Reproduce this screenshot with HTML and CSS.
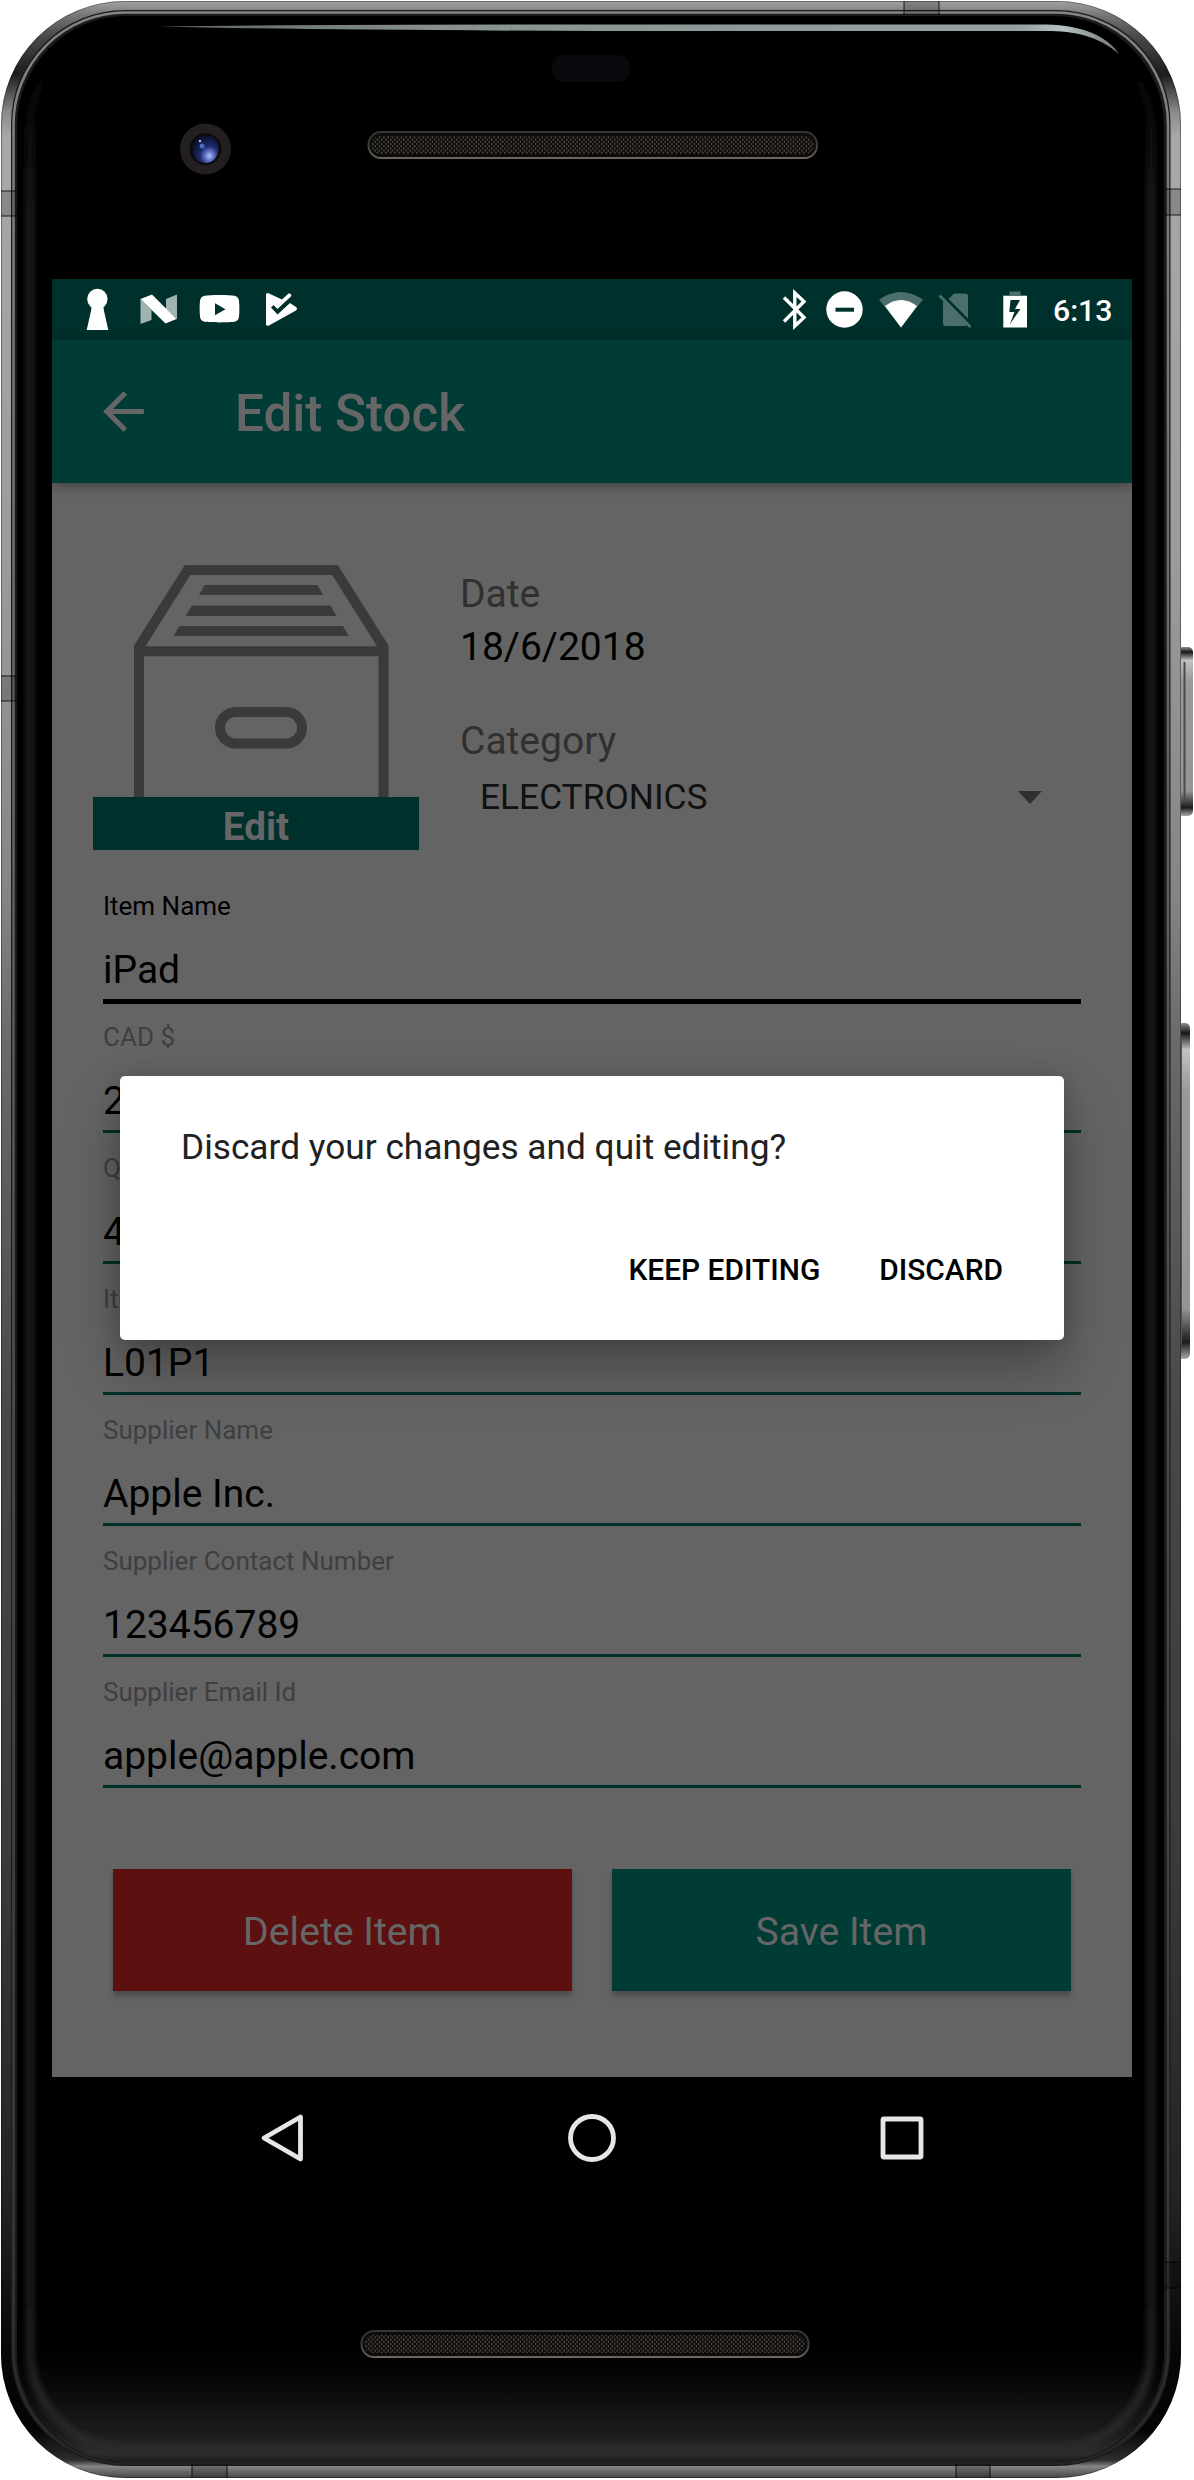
FILE: index.html
```html
<!DOCTYPE html>
<html lang="en">
<head>
<meta charset="utf-8">
<title>Edit Stock</title>
<link rel="stylesheet" href="styles.css">
</head>
<body>
<div class="device">
  <svg class="device-art" viewBox="0 0 1194 2480" aria-hidden="true">
    <defs>
      <linearGradient id="rim" gradientUnits="userSpaceOnUse" x1="0" y1="0" x2="0" y2="2480">
        <stop offset="0" stop-color="#a4a6a5"/><stop offset=".006" stop-color="#777"/>
        <stop offset=".014" stop-color="#4c4c4c"/><stop offset=".03" stop-color="#1c1c1c"/>
        <stop offset=".045" stop-color="#8a8a8a"/><stop offset=".055" stop-color="#a8a8a8"/>
        <stop offset=".22" stop-color="#9c9c9c"/><stop offset=".36" stop-color="#858585"/>
        <stop offset=".42" stop-color="#6a6a6a"/><stop offset=".57" stop-color="#484848"/>
        <stop offset=".75" stop-color="#3a3a3a"/><stop offset=".89" stop-color="#222"/>
        <stop offset=".95" stop-color="#060606"/><stop offset=".98" stop-color="#050505"/>
        <stop offset=".992" stop-color="#2e2e2e"/><stop offset=".9945" stop-color="#858585"/>
        <stop offset="1" stop-color="#3c3c3c"/>
      </linearGradient>
      <linearGradient id="bezel" gradientUnits="userSpaceOnUse" x1="0" y1="0" x2="0" y2="2480">
        <stop offset="0" stop-color="#858585"/><stop offset=".5" stop-color="#505050"/>
        <stop offset=".9" stop-color="#383838"/><stop offset="1" stop-color="#242424"/>
      </linearGradient>
      <linearGradient id="chin" x1="0" y1="0" x2="0" y2="1">
        <stop offset="0" stop-color="#000"/><stop offset=".3" stop-color="#080808"/>
        <stop offset=".75" stop-color="#1c1c1c"/><stop offset=".92" stop-color="#2d2d2d"/>
        <stop offset="1" stop-color="#1e1e1e"/>
      </linearGradient>
      <linearGradient id="sheen" gradientUnits="userSpaceOnUse" x1="0" y1="60" x2="0" y2="2462">
        <stop offset="0" stop-color="#1e1e1e" stop-opacity="0"/><stop offset=".06" stop-color="#1e1e1e"/>
        <stop offset=".93" stop-color="#1e1e1e"/><stop offset="1" stop-color="#2c2c2c"/>
      </linearGradient>
      <filter id="soft" x="-5%" y="-5%" width="110%" height="110%"><feGaussianBlur stdDeviation="3"/></filter>
      <linearGradient id="glare" gradientUnits="userSpaceOnUse" x1="159" y1="0" x2="1120" y2="0">
        <stop offset="0" stop-color="#5c6666"/><stop offset=".3" stop-color="#879190"/>
        <stop offset=".9" stop-color="#98a2a2"/><stop offset=".94" stop-color="#b9c3c3"/><stop offset="1" stop-color="#6c7474"/>
      </linearGradient>
      <linearGradient id="key" x1="0" y1="0" x2="0" y2="1">
        <stop offset="0" stop-color="#8c8c8c"/><stop offset=".03" stop-color="#161616"/>
        <stop offset=".08" stop-color="#c2c2c2"/><stop offset=".2" stop-color="#999"/>
        <stop offset=".85" stop-color="#959595"/><stop offset=".95" stop-color="#1c1c1c"/>
        <stop offset="1" stop-color="#aaa"/>
      </linearGradient>
      <linearGradient id="slot" x1="0" y1="0" x2="0" y2="1">
        <stop offset="0" stop-color="#343434"/><stop offset=".5" stop-color="#3c3c3c"/><stop offset="1" stop-color="#6b6660"/>
      </linearGradient>
      <radialGradient id="lens" cx=".65" cy=".75" r=".8">
        <stop offset="0" stop-color="#b4c4ff"/><stop offset=".2" stop-color="#6476c8"/>
        <stop offset=".45" stop-color="#1c2a6c"/><stop offset="1" stop-color="#080b1c"/>
      </radialGradient>
      <pattern id="mesh" width="4.4" height="4.4" patternUnits="userSpaceOnUse">
        <rect width="4.4" height="4.4" fill="#0b0a08"/>
        <ellipse cx="1.1" cy="1.1" rx=".8" ry="1" fill="#5d574c"/>
        <ellipse cx="3.3" cy="3.3" rx=".8" ry="1" fill="#5d574c"/>
      </pattern>
      <clipPath id="glass"><rect x="17" y="16" width="1147" height="2446" rx="110"/></clipPath>
    </defs>
    <rect x="1178" y="647" width="15" height="169" rx="5" fill="url(#key)"/>
    <path d="M1184.500 662v140" stroke="#4a4a4a" stroke-width="2"/>
    <rect x="1178" y="1023" width="12" height="336" rx="5" fill="url(#key)"/>
    <path d="M1181.500 1040v305" stroke="#555" stroke-width="1"/>
    <rect x="1" y="1" width="1180" height="2477" rx="124" fill="url(#rim)"/>
    <rect x="1.500" y="1.500" width="1179" height="2476" rx="123" fill="none" stroke="#000" stroke-opacity=".35"/>
    <rect x="11" y="10" width="1159.500" height="2456" rx="114" fill="#1b1b1b"/>
    <rect x="13.500" y="12.500" width="1154.500" height="2451" rx="112" fill="none" stroke="url(#bezel)" stroke-width="2.500"/>
    <g fill="#000" fill-opacity=".18">
      <path d="M1 191h16v25H1zM1 676h16v25H1zM1165 189h16v26h-16zM1165 2262h16v26h-16zM904 1h35v14h-35zM192 2463h35v15h-35zM956 2463h34v15h-34z"/>
      <path d="M1 191h16M1 216h16M1 676h16M1 701h16M1165 189h16M1165 215h16M1165 2262h16M1165 2288h16M904 1v14M939 1v14M192 2463v15M227 2463v15M956 2463v15M990 2463v15" stroke="#000" stroke-opacity=".55" stroke-width="1.500"/>
    </g>
    <rect x="17" y="16" width="1147" height="2446" rx="110" fill="#000"/>
    <g clip-path="url(#glass)">
      <rect x="17" y="2350" width="1147" height="112" fill="url(#chin)"/>
      <rect x="30" y="29" width="1121" height="2421" rx="100" fill="none" stroke="url(#sheen)" stroke-width="8" filter="url(#soft)"/>
    </g>
    <path d="M159 26.500 Q300 24.500 600 24.500H1046C1083 25 1108 37 1119 54C1098 36 1075 31 1046 31H600Q300 30 159 26.500Z" fill="url(#glare)"/>
    <rect x="552" y="55" width="78" height="27" rx="12" fill="#08090d"/>
    <circle cx="205.500" cy="149" r="25.500" fill="#231f20"/>
    <circle cx="205.500" cy="149" r="16" fill="#0b0a0c"/>
    <ellipse cx="205.500" cy="149" rx="13" ry="14" fill="url(#lens)"/>
    <circle cx="202" cy="146" r="2.500" fill="#4a69c8"/><circle cx="200" cy="141" r="1.300" fill="#a9b7e6"/>
    <g stroke="url(#slot)" stroke-width="2">
      <rect x="368.500" y="132" width="448.500" height="26" rx="12.500" fill="#0d0c0b"/>
      <rect x="361.500" y="2331" width="447" height="26" rx="12.500" fill="#0d0c0b"/>
    </g>
    <rect x="371" y="136" width="443" height="18" rx="9" fill="url(#mesh)"/>
    <rect x="364" y="2335" width="441" height="18" rx="9" fill="url(#mesh)"/>
  </svg>

  <div class="screen">
    <div class="status-bar">
      <svg class="status-left" width="240" height="61" viewBox="80 279 240 61" fill="#fff">
        <circle cx="97.400" cy="299" r="10.200"/><path d="M92 304h11l1 7 4.300 19H86.700l4.300-19z"/>
        <path fill="#a0b3b0" d="M140.500 299l11 11v10l-11 4zM166 299l11-4.500v25L166 309z"/>
        <path d="M140.500 299l11.500-4.500 24.500 24.500-11 4.500z"/>
        <path fill-rule="evenodd" d="M219.500 295c7 0 12 .2 15 .8 3 .7 4 2.200 4.500 5 .5 5 .5 11 0 16-.5 3-1.500 4.300-4.500 5-5 .8-25 .8-30 0-3-.7-4-2-4.500-5-.5-5-.5-11 0-16 .5-2.800 1.500-4.300 4.500-5 3-.6 8-.8 15-.8zM215 303.300v12l10.500-6z"/>
        <path d="M266 295c0-1.600 1.500-2.400 3-1.600l13 6 6-5.500c1.500-1 3.500 0 3.400 2L277.500 309l-4-4-2.500 2.500 6.500 7 12.500-11.500 6 4c1.300 1 1.300 2.500 0 3.400L269 325.500c-1.500.8-3 .2-3-1.500z"/>
      </svg>
      <svg class="status-right" width="260" height="61" viewBox="776 279 260 61" fill="#fff">
        <path d="M784 297.500L804 317.500 794.800 326V293L804 301.500 784 321.500" fill="none" stroke="#fff" stroke-width="3.400"/>
        <circle cx="844.500" cy="309.500" r="18.200"/><path fill="#00312c" d="M835.500 307.700h18.500v4h-18.500z"/>
        <path fill="#4d6f6b" d="M901 327.500L879 299.500Q901 284.500 923 299.500z"/><path d="M901 327.500L885 306Q901 294 917 306z"/>
        <path fill="#4d6f6b" d="M954 293.500h11.500q2.500 0 2.500 2.500v22.500L948.500 299zM943 300.500L967 325q-.5 1-2 1H946q-3 0-3-3z"/>
        <path d="M939.500 295.500l31 31.500" stroke="#4d6f6b" stroke-width="2.800"/>
        <path fill="#4d6f6b" d="M1009.500 291.500h11v3.500h6.500v3h-24v-3h6.500z"/>
        <path fill-rule="evenodd" d="M1003.300 296H1027v31.500h-23.700zM1010.500 300l-1.200 12h5.200l-4.500 12 10.500-15h-5.500l5-9z"/>
      </svg>
      <span class="clock">6:13</span>
    </div>
    <header class="toolbar">
      <svg class="back" viewBox="0 0 24 24" fill="#666"><path d="M20 11H7.830l5.590-5.590L12 4l-8 8 8 8 1.410-1.410L7.830 13H20v-2z"/></svg>
      <h1 class="title">Edit Stock</h1>
    </header>
    <main class="form">
      <section class="summary">
        <div class="photo">
          <svg class="photo-box" viewBox="93 565 326 232" fill="none" stroke="#3a3a3a" stroke-width="10">
            <path d="M139 802V647L187.600 570H335L383.500 647V802M139 651.300H383.500" />
            <rect x="220" y="712" width="82" height="31.500" rx="15.700"/>
            <path stroke="none" fill="#3a3a3a" d="M204.600 585h113l5.400 10H199zM192 605.500h138.400l6 10.500H185.700zM179.300 626H343l5.600 10h-175z"/>
          </svg>
          <div class="photo-edit">Edit</div>
        </div>
        <div class="details">
          <div class="caption">Date</div>
          <div class="date">18/6/2018</div>
          <div class="caption category">Category</div>
          <div class="spinner"><span>ELECTRONICS</span><i class="caret"></i></div>
        </div>
      </section>
      <section class="fields">
        <div class="field focused"><div class="label">Item Name</div><div class="value">iPad</div></div>
        <div class="field"><div class="label">CAD $</div><div class="value">250</div></div>
        <div class="field"><div class="label">Quantity</div><div class="value">40</div></div>
        <div class="field"><div class="label">Item Location</div><div class="value">L01P1</div></div>
        <div class="field"><div class="label">Supplier Name</div><div class="value">Apple Inc.</div></div>
        <div class="field"><div class="label">Supplier Contact Number</div><div class="value">123456789</div></div>
        <div class="field"><div class="label">Supplier Email Id</div><div class="value">apple@apple.com</div></div>
      </section>
      <div class="actions">
        <div class="button delete">Delete Item</div>
        <div class="button save">Save Item</div>
      </div>
    </main>
    <nav class="nav-bar">
      <svg viewBox="0 0 62 62"><path d="M49.500 10v42L13 31z"/></svg>
      <svg viewBox="0 0 62 62"><circle cx="31" cy="31" r="21.500"/></svg>
      <svg viewBox="0 0 62 62"><rect x="12" y="12" width="38" height="38" rx="1"/></svg>
    </nav>
    <div class="overlay">
      <div class="dialog">
        <p class="message">Discard your changes and quit editing?</p>
        <div class="dialog-actions"><span>KEEP EDITING</span><span>DISCARD</span></div>
      </div>
    </div>
  </div>
</div>
</body>
</html>
```
FILE: styles.css
```css
* { box-sizing: border-box; }
body { margin: 0; background: #fff; font-family: Roboto, sans-serif; }
.device { position: relative; width: 1194px; height: 2480px; padding: 279px 0 0 52px; overflow: hidden; }
.device-art { position: absolute; left: 0; top: 0; width: 1194px; height: 2480px; }
.screen { position: relative; width: 1080px; display: flex; flex-direction: column; }

.status-bar { height: 61px; background: #00302b; display: flex; align-items: center; padding: 0 20px 0 28px; }
.status-right { margin-left: auto; }
.clock { width: 76px; padding: 2px 0 0 17px; color: #fff; font-size: 30.2px; font-weight: 500; line-height: 61px; }

.toolbar { position: relative; z-index: 1; height: 143px; background: #003c35; display: flex; align-items: center; padding-left: 41px; box-shadow: 0 3px 10px rgba(0, 0, 0, .35); }
.back { width: 61px; height: 61px; }
.title { margin: 0 0 0 81px; padding-top: 4px; color: #666; font-size: 51.2px; font-weight: 500; line-height: 60px; }

.form { height: 1594px; background: #646464; }
.summary { display: flex; gap: 41px; padding: 0 51px 0 41px; }
.photo { width: 326px; padding-top: 82px; }
.photo-box { display: block; width: 326px; height: 232px; }
.photo-edit { height: 53px; padding-top: 2px; background: #00302b; color: #666; font-size: 38.6px; font-weight: 700; line-height: 55px; text-align: center; }
.details { flex: 1; padding-top: 85px; font-size: 39px; line-height: 53px; }
.caption { color: #303030; }
.category { margin-top: 41px; }
.date { color: #000; }
.spinner { display: flex; align-items: center; justify-content: space-between; height: 60px; padding: 0 39px 0 20px; margin-top: -1px; color: #111; font-size: 35.3px; line-height: 60px; }
.caret { border: 12.5px solid transparent; border-top: 13px solid #303030; border-bottom: 0; }

.fields { margin: 41px 51px 0; }
.field { height: 131px; }
.label { height: 30px; color: #3f3f3f; font-size: 26px; line-height: 30px; }
.value { height: 81px; padding-top: 27px; border-bottom: 3px solid #003029; color: #000; font-size: 39px; line-height: 45px; }
.focused .label { color: #000; }
.focused .value { height: 83px; border-bottom: 5px solid #000; }

.actions { display: flex; gap: 40px; margin-top: 61px; padding: 0 61px 0 61px; }
.button { flex: 1; height: 122px; padding-top: 1px; color: #666; font-size: 39.2px; line-height: 124px; text-align: center; box-shadow: 0 5px 5px rgba(0, 0, 0, .25); }
.delete { background: #5d1010; }
.save { background: #003c35; }

.nav-bar { height: 122px; display: grid; grid-template-columns: repeat(3, 310px); place-content: center; justify-items: center; background: #000; }
.nav-bar svg { width: 62px; height: 62px; fill: none; stroke: #e6e6e6; stroke-width: 4.8; stroke-linejoin: round; }

.overlay { position: absolute; z-index: 2; left: 68px; top: 797px; width: 944px; }
.dialog { height: 264px; padding: 50px 61px 0 61px; border-radius: 5px; background: #fff; box-shadow: 0 28px 54px rgba(0, 0, 0, .3), 0 0 20px rgba(0, 0, 0, .15); }
.message { margin: 0; color: #212121; font-size: 35.25px; line-height: 42px; }
.dialog-actions { display: flex; justify-content: flex-end; gap: 59px; margin-top: 82px; color: #000; font-size: 29.9px; font-weight: 500; line-height: 40px; }
```
